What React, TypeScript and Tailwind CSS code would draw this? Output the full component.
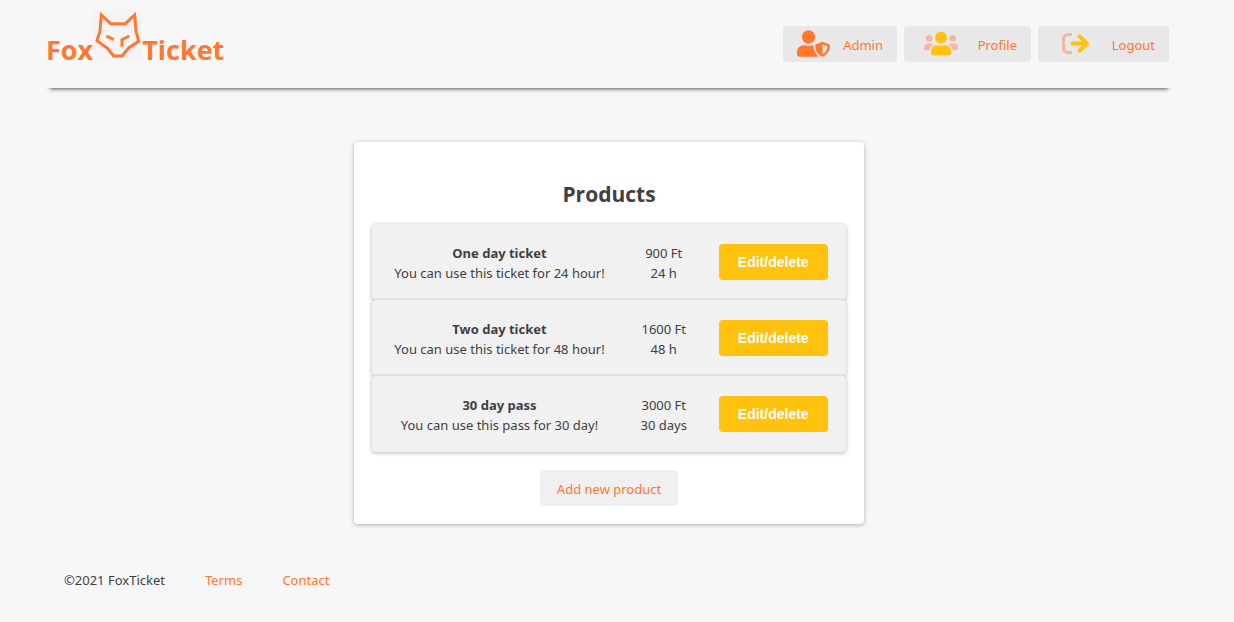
import type { ReactNode } from "react";
import { FaUserShield } from "react-icons/fa";

type Product = { name: string; description: string; price: string; validity: string };

const products: Product[] = [
  { name: "One day ticket", description: "You can use this ticket for 24 hour!", price: "900 Ft", validity: "24 h" },
  { name: "Two day ticket", description: "You can use this ticket for 48 hour!", price: "1600 Ft", validity: "48 h" },
  { name: "30 day pass", description: "You can use this pass for 30 day!", price: "3000 Ft", validity: "30 days" },
];

function FoxLogo() {
  return (
    <svg viewBox="0 0 147 156" className="h-[52px] w-[49px]" fill="none" stroke="#ff7730" strokeWidth="9" aria-hidden="true">
      <path fill="#f4f4f4" stroke="none" d="M0 0h147v156H0z" />
      <path d="M25 18 53 44H97L125 18 129 66 137 97 107 117 87 141H62L44 119 12 95 21 66Z" />
      <path strokeWidth="9" d="M40 81 62 92M109 81 87 92V113" />
    </svg>
  );
}

function UsersIcon() {
  return (
    <svg viewBox="0 0 640 512" className="h-[27px] w-[34px]" aria-hidden="true">
      <path
        fill="#f4b8a0"
        d="M96 224c35.300 0 64-28.700 64-64s-28.700-64-64-64-64 28.700-64 64 28.700 64 64 64zm448 0c35.300 0 64-28.700 64-64s-28.700-64-64-64-64 28.700-64 64 28.700 64 64 64zm32 32h-64c-17.600 0-33.500 7.100-45.100 18.600 40.300 22.100 68.900 62 75.100 109.400h66c17.700 0 32-14.300 32-32v-32c0-35.300-28.700-64-64-64zM173.100 274.600C161.500 263.100 145.600 256 128 256H64c-35.300 0-64 28.700-64 64v32c0 17.700 14.300 32 32 32h65.900c6.300-47.400 34.900-87.300 75.200-109.400z"
      />
      <path
        fill="#ffc20e"
        d="M320 256c61.900 0 112-50.100 112-112S381.900 32 320 32 208 82.100 208 144s50.100 112 112 112zm76.800 32h-8.300c-20.800 10-43.900 16-68.500 16s-47.600-6-68.500-16h-8.300C179.600 288 128 339.600 128 403.200V432c0 26.500 21.500 48 48 48h288c26.500 0 48-21.500 48-48v-28.800c0-63.600-51.600-115.200-115.200-115.200z"
      />
    </svg>
  );
}

function LogoutIcon() {
  return (
    <svg viewBox="0 0 27 27" className="size-[27px]" fill="none" aria-hidden="true">
      <path stroke="#f4b8a0" strokeWidth="3.200" d="M10 4.500H6a4.500 4.500 0 0 0-4.500 4.500v9A4.500 4.500 0 0 0 6 22.500h4" />
      <path stroke="#ffc20e" strokeWidth="4" strokeLinecap="round" d="M10.500 13.500H24M17.500 6.300 25 13.500 17.500 20.700" />
    </svg>
  );
}

function NavLink({ label, icon, className }: { label: string; icon: ReactNode; className: string }) {
  return (
    <a href="#" className={`flex h-9 items-center justify-between rounded-sm bg-[#e8e8e8] pr-3.5 pb-px text-[#ff7730] ${className}`}>
      {icon}
      <span className="pt-[3px]">{label}</span>
    </a>
  );
}

export default function App() {
  return (
    <div className="min-h-screen bg-[#f7f7f7] pr-4 font-['Noto_Sans','Open_Sans',sans-serif] text-[13px] leading-5 text-[#404040]">
      <header className="mx-[46px] flex h-[88px] items-start justify-between shadow-[0_5px_4px_-4px_#555]">
        <a href="#" className="flex items-end pt-[9px] font-['Open_Sans','Noto_Sans',sans-serif] text-[27px] leading-[22px] font-bold text-[#ff7730]">
          <span>Fox</span>
          <FoxLogo />
          <span>Ticket</span>
        </a>
        <nav className="mr-[3px] flex gap-[7px] pt-[26px]">
          <NavLink label="Admin" className="w-[114px] pl-3.5" icon={<FaUserShield className="h-[27px] w-[33px]" aria-hidden="true" />} />
          <NavLink label="Profile" className="w-[127px] pl-5" icon={<UsersIcon />} />
          <NavLink label="Logout" className="w-[131px] pl-6" icon={<LogoutIcon />} />
        </nav>
      </header>

      <main className="mx-auto mt-[54px] flex w-full max-w-[510px] flex-col items-center rounded-sm bg-white p-[18px] shadow-[0_1px_4px_rgba(0,0,0,0.3)]">
        <h1 className="pt-[18px] pb-3.5 font-['Open_Sans','Noto_Sans',sans-serif] text-[21px] leading-8 font-bold">Products</h1>
        <ul className="w-full">
          {products.map((product) => (
            <li
              key={product.name}
              className="grid h-[76px] grid-cols-4 items-center rounded-sm bg-[#f1f1f1] px-[18px] text-center shadow-[0_1px_4px_rgba(0,0,0,0.3)]"
            >
              <div className="col-span-2 pt-0.5 whitespace-nowrap">
                <h2 className="font-bold">{product.name}</h2>
                <p>{product.description}</p>
              </div>
              <div className="pt-0.5">
                <p>{product.price}</p>
                <p>{product.validity}</p>
              </div>
              <button type="button" className="h-9 rounded-sm bg-[#ffc20e] font-['Liberation_Sans',sans-serif] text-sm font-black text-white">
                Edit/delete
              </button>
            </li>
          ))}
        </ul>
        <button type="button" className="mt-[18px] h-9 rounded-sm bg-[#f0f0f0] px-[17px] pt-0.5 text-[#ff7730]">
          Add new product
        </button>
      </main>

      <footer className="mt-[46px] flex gap-10 px-16 pb-8">
        <span>©2021 FoxTicket</span>
        <a href="#" className="text-[#ff7730]">Terms</a>
        <a href="#" className="text-[#ff7730]">Contact</a>
      </footer>
    </div>
  );
}
